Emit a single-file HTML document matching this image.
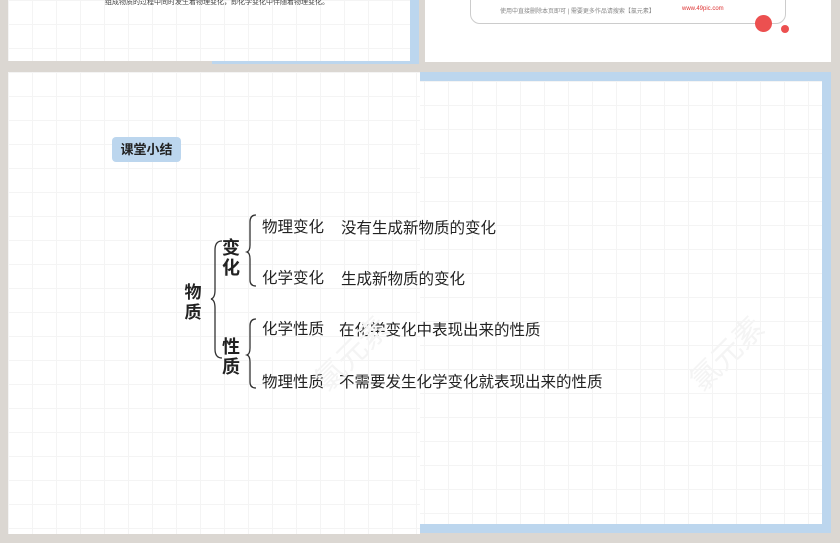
<!DOCTYPE html>
<html><head><meta charset="utf-8"><style>
body{margin:0;width:840px;height:543px;background:#dbd7d2;position:relative;overflow:hidden;font-family:"Liberation Sans","Noto Sans CJK SC",sans-serif;color:#222}
.a{position:absolute}
.grid{background-color:#fff;background-image:linear-gradient(#f4f4f4 1px,transparent 1px),linear-gradient(90deg,#f4f4f4 1px,transparent 1px);background-size:24px 24px}
.t{position:absolute;font-size:15.5px;white-space:nowrap}
.v{position:absolute;font-weight:bold;width:20px;line-height:20px;text-align:center}
</style></head><body>
<div class="a" style="left:212px;top:0;width:207px;height:64px;background:#bcd6ee"></div>
<div class="a grid" style="left:8px;top:0;width:402px;height:61px"></div>
<div class="a" style="left:105px;top:-3px;font-size:7px;color:#444">组成物质的过程中同时发生着物理变化，即化学变化中伴随着物理变化。</div>
<div class="a" style="left:425px;top:0;width:406px;height:62px;background:#fff"></div>
<div class="a" style="left:470px;top:-10px;width:314px;height:32px;border:1px solid #ccc;border-radius:10px;background:#fff"></div>
<div class="a" style="left:500px;top:6px;font-size:6px;color:#888">使用中直接删除本页即可 | 需要更多作品请搜索【氯元素】</div>
<div class="a" style="left:682px;top:6px;font-size:6px;color:#d33">www.49pic.com</div>
<div class="a" style="left:755px;top:15px;width:17px;height:17px;border-radius:50%;background:#ec5050"></div>
<div class="a" style="left:781px;top:25px;width:8px;height:8px;border-radius:50%;background:#ec5050"></div>
<div class="a" style="left:420px;top:72px;width:411px;height:461px;background:#bcd6ee"></div>
<div class="a grid" style="left:8px;top:72px;width:412px;height:462px"></div>
<div class="a grid" style="left:420px;top:81px;width:402px;height:443px;background-position:4px 0"></div>
<div class="a" style="left:112px;top:137px;width:69px;height:25px;background:#bcd6ee;border-radius:4px;font-weight:bold;font-size:13px;line-height:25px;text-align:center">课堂小结</div>
<div class="v" style="left:183px;top:283px;font-size:17px">物<br>质</div>
<div class="v" style="left:221px;top:238px;font-size:18px">变<br>化</div>
<div class="v" style="left:221px;top:337px;font-size:18px">性<br>质</div>
<svg class="a" style="left:0;top:0" width="840" height="543" fill="none" stroke="#333" stroke-width="1.3">
<path d="M222 241 Q215 241 215 250 L215 290 Q215 298 211 299 Q215 300 215 308 L215 349 Q215 358 222 358"/>
<path d="M256 215 Q250 215 250 222 L250 245 Q250 251 247 252 Q250 253 250 259 L250 280 Q250 286 256 286"/>
<path d="M256 319 Q250 319 250 326 L250 348 Q250 354 247 355 Q250 356 250 362 L250 382 Q250 388 256 388"/>
</svg>
<div class="t" style="left:262px;top:215px">物理变化</div>
<div class="t" style="left:341px;top:216px">没有生成新物质的变化</div>
<div class="t" style="left:262px;top:266px">化学变化</div>
<div class="t" style="left:341px;top:267px">生成新物质的变化</div>
<div class="t" style="left:262px;top:317px">化学性质</div>
<div class="t" style="left:339px;top:318px">在化学变化中表现出来的性质</div>
<div class="t" style="left:262px;top:370px">物理性质</div>
<div class="t" style="left:339px;top:370px">不需要发生化学变化就表现出来的性质</div>
<div class="a" style="left:305px;top:330px;font-size:30px;color:#f4f4f4;transform:rotate(-45deg)">氯元素</div>
<div class="a" style="left:680px;top:330px;font-size:30px;color:#f4f4f4;transform:rotate(-45deg)">氯元素</div>
</body></html>
